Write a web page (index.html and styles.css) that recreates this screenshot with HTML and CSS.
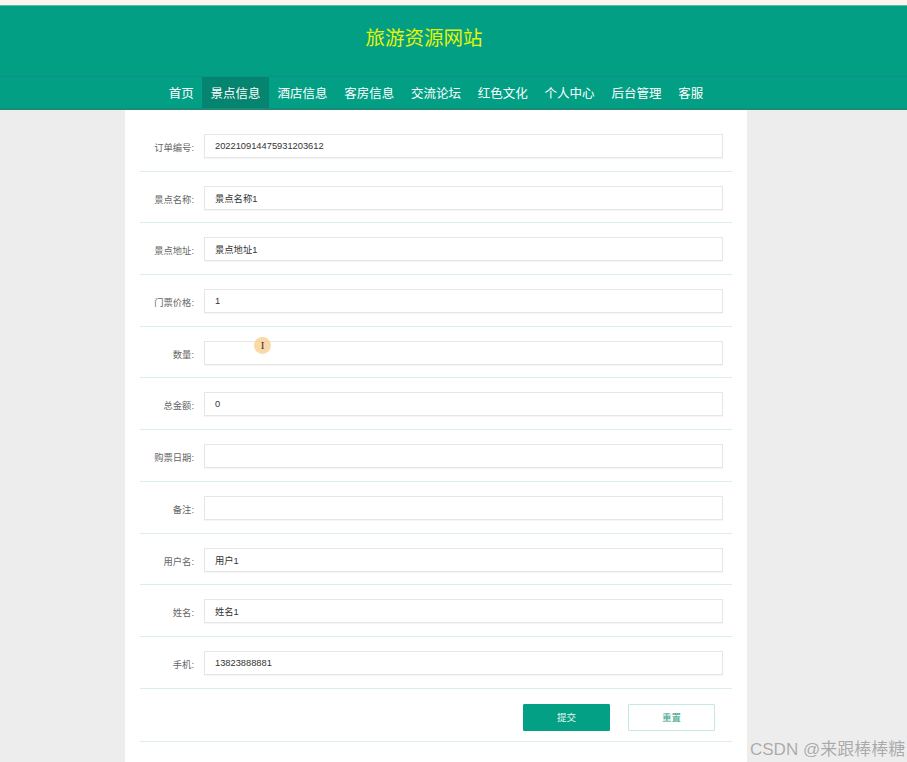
FILE: index.html
```html
<!DOCTYPE html>
<html lang="zh">
<head>
<meta charset="utf-8">
<title>旅游资源网站</title>
<link rel="stylesheet" href="styles.css">
</head>
<body>
<div class="topstrip"></div>
<header class="header">
  <h1 class="title">旅游资源网站</h1>
</header>
<nav class="nav">
  <a class="nav-item">首页</a>
  <a class="nav-item active">景点信息</a>
  <a class="nav-item">酒店信息</a>
  <a class="nav-item">客房信息</a>
  <a class="nav-item">交流论坛</a>
  <a class="nav-item">红色文化</a>
  <a class="nav-item">个人中心</a>
  <a class="nav-item">后台管理</a>
  <a class="nav-item">客服</a>
</nav>
<main class="panel">
  <form class="form">
    <div class="row"><label class="label">订单编号:</label><div class="input">202210914475931203612</div></div>
    <div class="row"><label class="label">景点名称:</label><div class="input">景点名称1</div></div>
    <div class="row"><label class="label">景点地址:</label><div class="input">景点地址1</div></div>
    <div class="row"><label class="label">门票价格:</label><div class="input">1</div></div>
    <div class="row"><label class="label">数量:</label><div class="input"></div></div>
    <div class="row"><label class="label">总金额:</label><div class="input">0</div></div>
    <div class="row"><label class="label">购票日期:</label><div class="input"></div></div>
    <div class="row"><label class="label">备注:</label><div class="input"></div></div>
    <div class="row"><label class="label">用户名:</label><div class="input">用户1</div></div>
    <div class="row"><label class="label">姓名:</label><div class="input">姓名1</div></div>
    <div class="row"><label class="label">手机:</label><div class="input">13823888881</div></div>
    <div class="row btn-row">
      <button type="button" class="btn btn-primary">提交</button>
      <button type="button" class="btn btn-default">重置</button>
    </div>
  </form>
  <div class="cursor"><span class="ibeam">I</span></div>
</main>
<div class="watermark">CSDN @来跟棒棒糖</div>
</body>
</html>
```
FILE: styles.css
```css
html, body {
  margin: 0;
  padding: 0;
}
body {
  background: #ededed;
  font-family: "Liberation Sans", "Noto Sans CJK SC", sans-serif;
  width: 907px;
  height: 762px;
  overflow: hidden;
  position: relative;
}
.topstrip {
  height: 5px;
  background: #fcf4ee;
  border-bottom: 1px solid #5fb8a5;
}
.header {
  height: 71px;
  box-sizing: border-box;
  background: #029f85;
  border-bottom: 1px solid #0f8f8e;
  display: flex;
  align-items: center;
  justify-content: center;
  padding: 0 59px 9px 0;
}
.title {
  margin: 0;
  font-family: "Noto Sans CJK SC", sans-serif;
  font-weight: normal;
  font-size: 19.5px;
  color: #e4f406;
}
.nav {
  height: 31px;
  background: #029f85;
  border-bottom: 2px solid #1b8a76;
  display: flex;
  justify-content: center;
  padding-right: 35px;
}
.nav-item {
  display: flex;
  align-items: center;
  padding: 0 8.4px;
  color: #ffffff;
  font-family: "Noto Sans CJK SC", sans-serif;
  font-size: 12.5px;
}
.nav-item.active {
  background: #05846f;
}
.panel {
  position: relative;
  margin-left: 125px;
  width: 592px;
  padding: 10px 15px 0;
  background: #ffffff;
  min-height: 660px;
}
.form {
  display: flex;
  flex-direction: column;
}
.row {
  display: flex;
  align-items: center;
  padding: 14px 9px 12.7px 0;
  border-bottom: 1px solid #dceeea;
}
.label {
  width: 54px;
  margin-right: 10px;
  padding-top: 2px;
  text-align: right;
  font-size: 9.3px;
  color: #666666;
  white-space: nowrap;
}
.input {
  flex: 1;
  height: 22px;
  box-sizing: content-box;
  border: 1px solid #e6e6e6;
  box-shadow: 0 1px 1px rgba(0,0,0,0.04);
  padding: 0 10px;
  display: flex;
  align-items: center;
  font-size: 9.3px;
  color: #333333;
}
.btn-row {
  justify-content: flex-end;
  padding: 15px 17px 10px 0;
  gap: 18px;
}
.btn {
  width: 87px;
  height: 27px;
  font-family: "Noto Sans CJK SC", sans-serif;
  font-size: 9.5px;
  border-radius: 1px;
  padding: 0;
}
.btn-primary {
  background: #04a085;
  border: 1px solid #04a085;
  color: #e8f7f3;
}
.btn-default {
  background: #ffffff;
  border: 1px solid #c5e9e1;
  color: #2c9f86;
}
.cursor {
  position: absolute;
  left: 129px;
  top: 227px;
  width: 17px;
  height: 17px;
  border-radius: 50%;
  background: rgba(248, 204, 140, 0.75);
  display: flex;
  align-items: center;
  justify-content: center;
}
.ibeam {
  font-family: "Liberation Serif", serif;
  font-size: 11px;
  color: #333;
  line-height: 1;
}
.watermark {
  position: absolute;
  left: 750px;
  top: 735px;
  font-family: "Liberation Sans", "Noto Sans CJK SC", sans-serif;
  font-size: 17px;
  color: #a9a9a9;
  text-shadow: 0 0 1px #ffffff;
  white-space: nowrap;
}
```
